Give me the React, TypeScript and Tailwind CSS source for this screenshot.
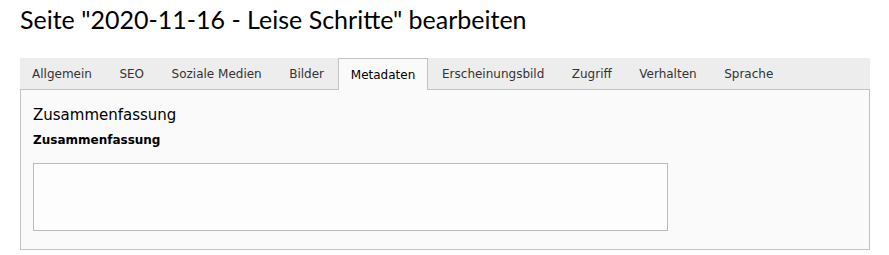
import React from "react";

const tabs = [
  "Allgemein",
  "SEO",
  "Soziale Medien",
  "Bilder",
  "Metadaten",
  "Erscheinungsbild",
  "Zugriff",
  "Verhalten",
  "Sprache",
];

const App = () => {
  const active = "Metadaten";

  return (
    <div className="min-h-screen bg-white pl-5 pr-[19px] text-[#333]" style={{ fontFamily: "Verdana, 'DejaVu Sans', sans-serif" }}>
      {/* Header */}
      <h1 className="pt-[4px] pb-[24px] text-[25px] leading-[30px] text-black" style={{ fontFamily: "Lato, 'Open Sans', sans-serif" }}>
        Seite "2020-11-16 - Leise Schritte" bearbeiten
      </h1>

      {/* Tabs */}
      <div className="flex h-[32px] bg-[#ededed] border-b border-[#c3c3c3]">
        {tabs.map((tab, i) => (
          <div
            key={tab}
            className={
              tab === active
                ? "-mb-px px-[12px] flex items-center text-[12px] text-black bg-[#fafafa] border border-b-0 border-[#c3c3c3]"
                : (i === 0 ? "pl-[12px] pr-[13.75px] " : "px-[13.75px] ") + "flex items-center text-[12px] text-[#333]"
            }
          >
            {tab}
          </div>
        ))}
      </div>

      {/* Panel */}
      <div className="bg-[#fafafa] border border-t-0 border-[#c3c3c3] px-[12px] pt-[15px] pb-[18px]">
        <h2 className="text-[15px] leading-[20px] text-black">Zusammenfassung</h2>
        <label className="block mt-[7px] text-[12px] font-bold text-black leading-[17px]">Zusammenfassung</label>
        <textarea className="block mt-[14px] w-[635px] h-[68px] bg-[#fdfdfd] border border-[#bbbbbb] resize-none" />
      </div>
    </div>
  );
};

export default App;
